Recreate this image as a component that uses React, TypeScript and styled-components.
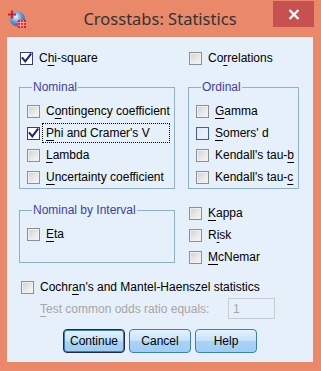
import React from "react";
import styled, { createGlobalStyle, css } from "styled-components";

const Global = createGlobalStyle`
  html, body { margin: 0; padding: 0; background: #ffffff; }
  body { width: 321px; height: 371px; overflow: hidden; }
  * { box-sizing: border-box; }
`;

const Window = styled.div`
  width: 321px;
  height: 371px;
  background: #e9896a;
  display: flex;
  flex-direction: column;
  padding: 0 8px 9px 7px;
  font-family: "Liberation Sans", Arial, sans-serif;
  font-size: 12px;
  color: #000;
`;

const TitleBar = styled.div`
  height: 37px;
  display: grid;
  grid-template-columns: 1fr auto 1fr;
  align-items: start;
`;

const AppIcon = styled.svg`
  justify-self: start;
  margin-top: 10px;
  margin-left: 1px;
`;

const Title = styled.div`
  font-family: "Noto Sans", "Open Sans", sans-serif;
  font-size: 16.5px;
  line-height: 20px;
  color: #333333;
  margin-top: 9px;
`;

const CloseButton = styled.div`
  justify-self: end;
  width: 41px;
  height: 26px;
  margin-top: 1px;
  margin-right: -1px;
  background: #c75050;
  display: flex;
  align-items: center;
  justify-content: center;
`;

const Client = styled.div`
  flex: 1;
  background: #e6f0fa;
  display: flex;
  flex-direction: column;
  padding: 10px 14px 0 12px;
`;

const TwoCols = styled.div<{ $mt?: number }>`
  display: grid;
  grid-template-columns: 156px 111px;
  column-gap: 13px;
  align-items: start;
  margin-top: ${(p) => p.$mt ?? 0}px;
`;

const Group = styled.fieldset<{ $pb?: number; $mt?: number }>`
  margin: ${(p) => p.$mt ?? 0}px 0 0 0;
  padding: 6px 0 ${(p) => p.$pb ?? 0}px 7px;
  border: 1px solid #8fb0c9;
  min-width: 0;
`;

const Legend = styled.legend`
  color: #3f3f9e;
  padding: 0 1px;
  margin-left: 5px;
  line-height: 14px;
  height: 14px;
`;

const List = styled.div`
  display: flex;
  flex-direction: column;
`;

const Row = styled.div<{ $pl?: number; $mt?: number }>`
  height: 22px;
  display: flex;
  align-items: center;
  padding-left: ${(p) => p.$pl ?? 0}px;
  margin-top: ${(p) => p.$mt ?? 0}px;
  white-space: nowrap;
`;

const Box = styled.span<{ $checked?: boolean; $hot?: boolean }>`
  flex: none;
  width: 13px;
  height: 13px;
  border: 1px solid #8e8f8f;
  background: linear-gradient(135deg, #d0d0d0 0%, #ebebeb 60%, #f6f6f6 100%);
  box-shadow: inset 0 0 0 1px #f0f0f0;
  display: flex;
  align-items: center;
  justify-content: center;
  ${(p) =>
    p.$checked &&
    css`
      border-color: #3a3f6a;
      background: #ffffff;
      box-shadow: none;
    `}
  ${(p) =>
    p.$hot &&
    css`
      border-color: #3c5fa8;
      background: linear-gradient(135deg, #dfe7ef 0%, #f2f6fa 100%);
      box-shadow: inset 0 0 0 1px #e8eef5;
    `}
`;

const Label = styled.span<{ $focus?: boolean }>`
  margin-left: 2px;
  padding: 2px 3px;
  line-height: 14px;
  border: 1px dotted transparent;
  ${(p) =>
    p.$focus &&
    css`
      border-color: #000;
      flex: 1;
      margin-right: 4px;
    `}
`;

const U = styled.span`
  text-decoration: underline;
  text-underline-offset: 3px;
`;

const DisabledRow = styled.div`
  height: 21px;
  display: flex;
  align-items: center;
  padding-left: 21px;
  color: #a6a6a6;
  white-space: nowrap;
`;

const DisabledLabel = styled.span`
  width: 188px;
`;

const OddsInput = styled.div`
  width: 47px;
  height: 21px;
  border: 1px solid #c9ccd0;
  color: #a6a6a6;
  padding: 3px 4px;
  line-height: 14px;
`;

const ButtonRow = styled.div`
  display: flex;
  justify-content: center;
  gap: 4px;
  margin-top: 10px;
  padding-left: 2px;
`;

const Button = styled.button<{ $default?: boolean }>`
  width: 62px;
  height: 24px;
  border-radius: 4px;
  border: 1px solid #3c7fb1;
  background: linear-gradient(to bottom, #e4f2fd 0%, #c4e2fa 50%, #a9d3f6 51%, #9fcdf3 100%);
  font-family: "Liberation Sans", Arial, sans-serif;
  font-size: 12px;
  color: #000;
  padding: 0;
  ${(p) =>
    p.$default &&
    css`
      border-color: #1e2b3c;
      box-shadow: inset 0 0 0 1px #3c7fb1;
    `}
`;

const Mn: React.FC<{ text: string; u: number }> = ({ text, u }) => (
  <>
    {text.slice(0, u)}
    <U>{text[u]}</U>
    {text.slice(u + 1)}
  </>
);

const Check = () => (
  <svg width="11" height="11" viewBox="0 0 11 11">
    <path d="M1.6 5.2 L4.3 8.4 L9.6 1.4" fill="none" stroke="#1f2290" strokeWidth="2.1" strokeLinecap="square" />
  </svg>
);

type CB = {
  text: string;
  u: number;
  checked?: boolean;
  hot?: boolean;
  focus?: boolean;
  pl?: number;
  mt?: number;
};

const CheckRow: React.FC<CB> = ({ text, u, checked, hot, focus, pl, mt }) => (
  <Row $pl={pl} $mt={mt}>
    <Box $checked={checked} $hot={hot}>{checked && <Check />}</Box>
    <Label $focus={focus}>
      <Mn text={text} u={u} />
    </Label>
  </Row>
);

export default function App() {
  return (
    <>
      <Global />
      <Window>
        <TitleBar>
          <AppIcon width="18" height="18" viewBox="0 0 18 18">
            <defs>
              <radialGradient id="g" cx="0.4" cy="0.35" r="0.7">
                <stop offset="0" stopColor="#e8f4ff" />
                <stop offset="0.5" stopColor="#6aa0d8" />
                <stop offset="1" stopColor="#1f5aa8" />
              </radialGradient>
            </defs>
            <circle cx="9.5" cy="9" r="7.5" fill="url(#g)" />
            <path d="M4 0.5 V8.5 M0 4.5 H8" stroke="#d4202a" strokeWidth="2.2" />
            <rect x="10" y="10" width="8" height="8" fill="#d4202a" />
            <path d="M10 12.6 H18 M10 15.3 H18 M12.6 10 V18 M15.3 10 V18" stroke="#f6c8c8" strokeWidth="0.8" />
          </AppIcon>
          <Title>Crosstabs: Statistics</Title>
          <CloseButton>
            <svg width="12" height="11" viewBox="0 0 12 11">
              <path d="M1.5 1 L10.5 10 M10.5 1 L1.5 10" stroke="#ffffff" strokeWidth="2.2" />
            </svg>
          </CloseButton>
        </TitleBar>
        <Client>
          <TwoCols>
            <CheckRow text="Chi-square" u={1} checked pl={1} />
            <CheckRow text="Correlations" u={2} pl={1} />
          </TwoCols>
          <TwoCols $mt={11}>
            <Group>
              <Legend>Nominal</Legend>
              <List>
                <CheckRow text="Contingency coefficient" u={1} />
                <CheckRow text="Phi and Cramer's V" u={0} checked focus />
                <CheckRow text="Lambda" u={0} />
                <CheckRow text="Uncertainty coefficient" u={0} />
              </List>
            </Group>
            <Group>
              <Legend>Ordinal</Legend>
              <List>
                <CheckRow text="Gamma" u={0} />
                <CheckRow text="Somers' d" u={0} hot />
                <CheckRow text="Kendall's tau-b" u={14} />
                <CheckRow text="Kendall's tau-c" u={14} />
              </List>
            </Group>
          </TwoCols>
          <TwoCols $mt={13}>
            <Group $mt={1} $pb={17}>
              <Legend>Nominal by Interval</Legend>
              <List>
                <CheckRow text="Eta" u={0} />
              </List>
            </Group>
            <List>
              <CheckRow text="Kappa" u={0} pl={1} />
              <CheckRow text="Risk" u={1} pl={1} />
              <CheckRow text="McNemar" u={0} pl={1} />
            </List>
          </TwoCols>
          <CheckRow text="Cochran's and Mantel-Haenszel statistics" u={5} pl={2} mt={8} />
          <DisabledRow>
            <DisabledLabel>
              <Mn text="Test common odds ratio equals:" u={0} />
            </DisabledLabel>
            <OddsInput>1</OddsInput>
          </DisabledRow>
          <ButtonRow>
            <Button $default>Continue</Button>
            <Button>Cancel</Button>
            <Button>Help</Button>
          </ButtonRow>
        </Client>
      </Window>
    </>
  );
}
